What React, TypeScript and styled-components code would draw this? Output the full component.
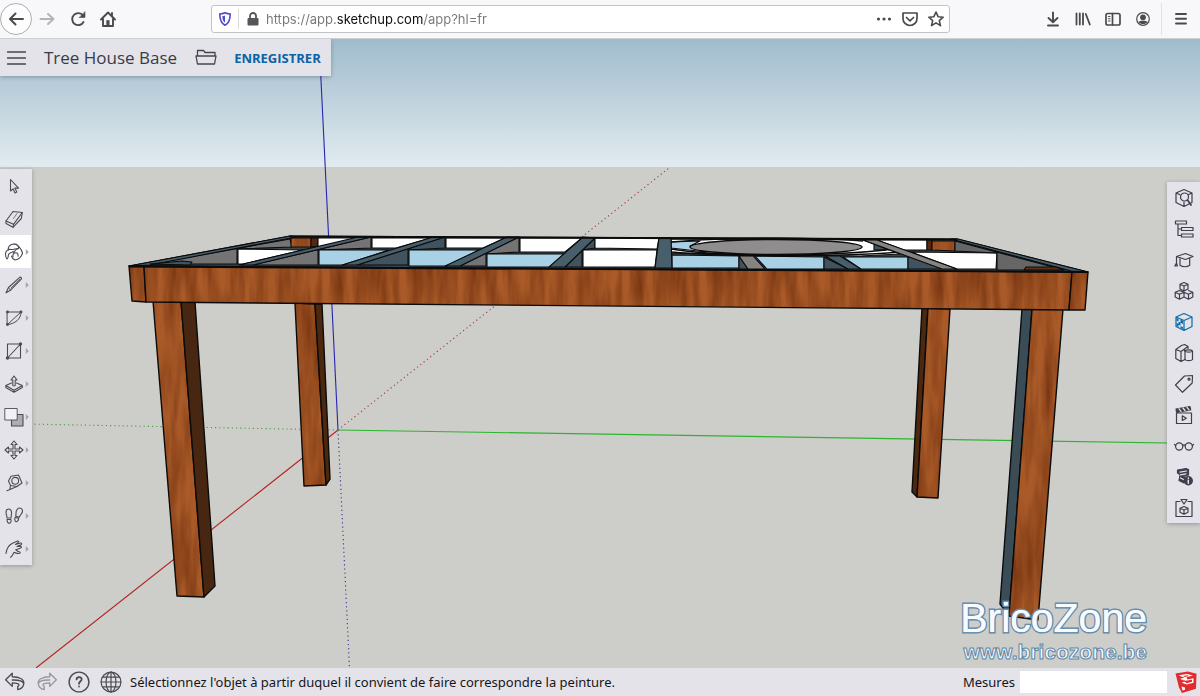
import React from "react";
import styled, { createGlobalStyle } from "styled-components";

const GlobalStyle = createGlobalStyle`
  *, *::before, *::after { box-sizing: border-box; }
  body { margin: 0; background: #cdcdca; }
  button, input { font: inherit; color: inherit; border: 0; padding: 0; margin: 0; background: none; }
`;

const Page = styled.div`
  display: flex;
  flex-direction: column;
  min-height: 100vh;
  font-family: "Open Sans", sans-serif;
  color: #222;
`;

/* ---------- browser bar ---------- */

const BrowserBar = styled.header`
  display: flex;
  align-items: center;
  height: 39px;
  background: #f8f8fa;
  border-bottom: 1px solid #c9d0d6;
  color: #4a4a4d;
`;

const NavGroup = styled.nav`
  display: flex;
  align-items: center;
  width: 211px;
`;

const BarButton = styled.button<{ $round?: boolean; $faint?: boolean; $w?: number }>`
  display: flex;
  align-items: center;
  justify-content: center;
  width: ${(p) => p.$w ?? 30}px;
  height: 32px;
  border-radius: ${(p) => (p.$round ? "50%" : "0")};
  border: ${(p) => (p.$round ? "1px solid #aeaeb2" : "0")};
  background: ${(p) => (p.$round ? "#fdfdfe" : "transparent")};
  color: ${(p) => (p.$faint ? "#b4b4b7" : "inherit")};
`;

const AddressBar = styled.div`
  display: flex;
  flex: 1;
  align-items: center;
  height: 28px;
  background: #fff;
  border: 1px solid #c3c3c6;
  border-radius: 3px;
`;

const AddressDivider = styled.span`
  width: 1px;
  height: 20px;
  background: #dcdcdf;
`;

const AddressInput = styled.input`
  flex: 1;
  min-width: 0;
  height: 24px;
  font-family: Inter, sans-serif;
  font-size: 13px;
  color: #77777a;
  outline: 0;
  background: linear-gradient(90deg, #77777a 71px, #0c0c0d 71px, #0c0c0d 157px, #77777a 157px);
  background-clip: text;
  -webkit-text-fill-color: transparent;
`;

const BrowserTools = styled.div`
  display: flex;
  align-items: center;
  justify-content: flex-end;
  width: 250px;
`;

const ToolsDivider = styled.span`
  width: 1px;
  height: 32px;
  margin-left: 3px;
  background: #e2e2e5;
`;

/* ---------- workspace ---------- */

const Workspace = styled.main`
  position: relative;
  flex: 1;
  display: flex;
  flex-direction: column;
  overflow: hidden;
  background: #cdcdca;
`;

const Scene = styled.svg`
  position: absolute;
  inset: 0;
  width: 100%;
  height: 100%;
`;

const FileBar = styled.div`
  position: relative;
  display: flex;
  align-items: center;
  align-self: flex-start;
  height: 37px;
  padding: 0 10px 0 6px;
  background: #e4e3e9;
  box-shadow: 0 1px 4px rgba(40, 50, 60, 0.35);
  color: #45454b;
`;

const FileName = styled.h1`
  margin: 0 18px;
  font-size: 17px;
  font-weight: 400;
  line-height: 24px;
  white-space: nowrap;
  color: #3a3a44;
`;

const IconButton = styled.button`
  display: flex;
  align-items: center;
  justify-content: center;
`;

const SaveButton = styled.button`
  margin-left: 17px;
  font-size: 13px;
  font-weight: 700;
  line-height: 20px;
  color: #0b62a4;
`;

const Panels = styled.div`
  position: relative;
  flex: 1;
  display: flex;
  align-items: flex-start;
  justify-content: space-between;
`;

const ToolPalette = styled.nav`
  display: flex;
  flex-direction: column;
  width: 32px;
  margin: 93px 0 40px;
  background: #e4e3e9;
  box-shadow: 0 1px 4px rgba(40, 50, 60, 0.35);
`;

const ToolButton = styled.button<{ $active?: boolean }>`
  display: flex;
  align-items: center;
  gap: 1px;
  height: 33px;
  padding-left: 4px;
  width: ${(p) => (p.$active ? "31px" : "32px")};
  background: ${(p) => (p.$active ? "#fff" : "transparent")};
  color: #4b4b55;
`;

const PanelPalette = styled.nav`
  display: flex;
  flex-direction: column;
  width: 33px;
  margin: 106px 0 40px;
  background: #e4e3e9;
  box-shadow: 0 1px 4px rgba(40, 50, 60, 0.35);
`;

const PanelButton = styled.button<{ $active?: boolean }>`
  display: flex;
  align-items: center;
  justify-content: center;
  height: 31px;
  color: ${(p) => (p.$active ? "#0b6aa8" : "#3f3f4d")};
`;

const Watermark = styled.div`
  position: absolute;
  right: 53px;
  bottom: 4px;
  font-family: "Liberation Sans", Arial, sans-serif;
  color: #f6fbff;
  text-align: right;
`;

const WatermarkTitle = styled.div`
  font-size: 41px;
  line-height: 44px;
  text-shadow: 0 0 1px #fff;
  -webkit-text-stroke: 3px #5f86a6;
  paint-order: stroke fill;
`;

const WatermarkSite = styled.div`
  font-size: 21px;
  font-weight: 700;
  line-height: 24px;
  -webkit-text-stroke: 1px #5f86a6;
`;

/* ---------- status bar ---------- */

const StatusBar = styled.footer`
  display: flex;
  align-items: center;
  height: 28px;
  padding: 0 2px 0 4px;
  background: #e4e3e9;
  color: #16161a;
  font-size: 13px;
  line-height: 20px;
`;

const StatusButtons = styled.div`
  display: flex;
  align-items: center;
  gap: 10px;
  color: #4b4b52;
`;

const StatusText = styled.p`
  flex: 1;
  margin: 0 0 0 8px;
  font-family: "Noto Sans", sans-serif;
`;

const MeasureLabel = styled.label`
  margin-right: 5px;
  font-family: "Noto Sans", sans-serif;
`;

const MeasureInput = styled.input`
  width: 147px;
  height: 22px;
  margin-right: 8px;
  background: #fff;
`;

/* ---------- icons ---------- */

type IconProps = { size?: number; children: React.ReactNode; sw?: number };

const Icon = ({ size = 20, sw = 1.2, children }: IconProps) => (
  <svg
    width={size}
    height={size}
    viewBox="0 0 20 20"
    fill="none"
    stroke="currentColor"
    strokeWidth={sw}
    strokeLinejoin="round"
    strokeLinecap="round"
    aria-hidden="true"
  >
    {children}
  </svg>
);

const Expander = () => (
  <svg width="4" height="8" viewBox="0 0 4 8" aria-hidden="true">
    <path d="M.8 1 3.800 4 .8 7z" fill="#a4a4ab" />
  </svg>
);

const tools: { label: string; more?: boolean; active?: boolean; art: React.ReactNode }[] = [
  { label: "Sélectionner", art: <path d="M6.5 3.500v11.500l2.600-2.200 1.900 4.200 1.800-.9-1.900-4h3.600z" /> },
  {
    label: "Effacer",
    art: (
      <>
        <path d="M9 2.500 18.300 3.500 17.300 9.500 9 18.300 2 14.500V12z" />
        <path d="m2 12 7.500 3.300L18.300 3.500M9.500 15.300l-.5 3" />
        <path d="m9.500 9.500 3.500-5" strokeWidth=".7" />
      </>
    ),
  },
  {
    label: "Peinture",
    more: true,
    active: true,
    art: (
      <>
        <path d="M4.500 8C3.500 4.800 6 2 10 2c3.500 0 5 2 4.500 4.500" />
        <path d="M10 2c4 .3 7.500 5 8.500 9-1 4-4.500 6.500-7.500 7-1.200-.5-3-2-3.500-4" />
        <path d="M14.500 6.500C12 6 9.500 8 7 7.500 4 6.800 1.500 9 1.500 12c0 2 .3 4 1.500 5 1.500-.5 1-3 1.500-4.500C5.200 11 7.200 11 9.200 9.300" />
        <path d="M9 15c-.3-3.500 1.500-7.500 5.500-8.500M9.500 11.500c2.500-1.500 5-.5 4.500 2.800" />
      </>
    ),
  },
  {
    label: "Crayon",
    more: true,
    art: (
      <>
        <path d="M2 17.800 4.500 12.500 15.700 2.300c1-.7 2.400.7 1.600 1.800L6.500 15.200z" />
        <path d="m4.500 12.500 2 2.700M7 13 16 4" strokeWidth=".8" />
      </>
    ),
  },
  {
    label: "Arc",
    more: true,
    art: (
      <>
        <path d="M3.500 4h13.500c0 7-6 12-13.500 12.500zM3.500 16.500 17 4" strokeWidth="1" />
        <g fill="currentColor"><circle cx="3.500" cy="4" r=".9" /><circle cx="17" cy="4" r=".9" /><circle cx="3.500" cy="16.500" r=".9" /></g>
      </>
    ),
  },
  {
    label: "Rectangle",
    more: true,
    art: (
      <>
        <path d="M3.500 3h13v14h-13zM3.500 17l13-14" strokeWidth="1.100" />
        <g fill="currentColor"><circle cx="3.500" cy="17" r="1.100" /><circle cx="16.500" cy="3" r="1.100" /></g>
      </>
    ),
  },
  {
    label: "Pousser/Tirer",
    more: true,
    art: (
      <>
        <path d="M7.500 9 1.800 11.500v2l8.200 4.700 8.300-4.700v-2L12.500 9M1.800 11.500l8.200 4.700 8.300-4.700M10 16.200v2" />
        <path d="M8.800 11.500V6H7l3-4 3 4h-1.800v5.500c-.6.700-1.800.7-2.400 0z" />
      </>
    ),
  },
  {
    label: "Échelle",
    more: true,
    art: (
      <>
        <path d="M13 7.500h6V19H7.500v-6" fill="#adadb3" />
        <path d="M1.200 1.500h12V13h-12z" fill="#f2f2f5" strokeWidth=".9" />
      </>
    ),
  },
  {
    label: "Déplacer",
    more: true,
    art: (
      <path d="m10 1 3 3.500h-2V9h4.500V7L19 10l-3.500 3v-2H11v4.500h2L10 19l-3-3.500h2V11H4.500v2L1 10l3.500-3v2H9V4.500H7z" />
    ),
  },
  {
    label: "Mètre",
    more: true,
    art: (
      <>
        <path d="M7 3.200 14.500 2 18 10 13 13.500 6.500 12.500 4.500 8z" />
        <circle cx="11.200" cy="7.800" r="3.400" />
        <path d="M13 13.500 3 17.800M6.500 12.500l-.7 4" />
      </>
    ),
  },
  {
    label: "Marcher",
    more: true,
    art: (
      <>
        <path d="M2 6.500C2 2 7 1.800 7.500 6c.3 2.300-.6 4-.4 6H3c.2-2-1-3.500-1-5.500zM3 13.500h4c.8 5-4 5-4 0z" />
        <path d="M12.800 4c2-3.700 6.500-1.500 5.500 2-.6 2-2.300 3-3 5.300l-3.600-1.400c.8-2-.4-3.700 1.100-5.900zM11.200 11.200l3.500 1.400c-.8 5-5.300 3.500-3.500-1.400z" />
      </>
    ),
  },
  {
    label: "Panoramique",
    more: true,
    art: (
      <>
        <path d="M2 14.500C2.500 10 4.500 6.500 8 4.500l5.500-2.500c1.300-.3 1.600 1 .5 1.700L11.500 5.500l5-1.500c1.300-.2 1.600 1.100.5 1.700l-4 1.800 3.500-.2c1.100 0 1.200 1.200.2 1.600l-4.700 1.900" />
        <path d="M12 10.800c1 1.300 2 1.800 3.800 2.200.9.700.1 1.600-.9 1.500-2 0-3.400-.7-4.900-1.200-1.300 1.500-.5 3-3.500 5" />
      </>
    ),
  },
];

const Cube = () => <path d="M10 1.500 18 5v9.500L10 18.500 2 14.500V5zM2 5l8 3.500L18 5M10 8.500v10" />;

const panels: { label: string; active?: boolean; art: React.ReactNode }[] = [
  {
    label: "Informations",
    art: (
      <>
        <path d="M10 1.500 18 5v9.500L10 18.500 2 14.500V5zM2 5l4 1.800M18 5l-4 1.800M10 14v4.500" />
        <circle cx="10.500" cy="9" r="4" fill="#e4e3e9" />
        <path d="m13.500 12 3.500 5" strokeWidth="1.700" />
      </>
    ),
  },
  {
    label: "Structure",
    art: <path d="M1.500 2h11v3h-11zM7.500 8.500H19v3H7.500zM7.500 15H19v3H7.500zM4 5v11.500h3.500M4 10h3.500" />,
  },
  {
    label: "Instructeur",
    art: (
      <>
        <path d="m2.500 6.500 9-3 7.500 3-7.500 3zM2.500 6.500V13M.8 16l1.700-3 .9 3z" />
        <path d="M6 8.500v6.800c2.700 1.900 7 1.900 9.700 0V8.200" />
      </>
    ),
  },
  {
    label: "Composants",
    art: (
      <path d="m10 1.500 4 1.800V8l-4 2-4-2V3.300zM6 3.300 10 5l4-1.700M10 5v5M5.500 9.500 10 11.300V16l-4.500 2.200L1.200 16v-4.700zM1.200 11.300l4.300 1.900 4.500-1.900M5.500 13.200v5M14.500 9.500l4.300 1.800V16l-4.300 2.200L10 16v-4.700M10 11.300l4.500 1.900 4.300-1.900M14.500 13.200v5" />
    ),
  },
  {
    label: "Matières",
    active: true,
    art: (
      <>
        <Cube />
        <path d="m2.500 6 2 .8v3l2 .8v-3L9 8.800v3.300l-2.500-1.300V14L9 15.300v2L6.500 16v-2.200l-2-1V15l-2-1v-3l2 .8V9.500l-2-1z" fill="currentColor" stroke="none" />
      </>
    ),
  },
  {
    label: "Styles",
    art: (
      <>
        <path d="M10.500 8V6L7 8.500 1.800 6.500v9l5.200 3V8.500M1.800 6.500 7.500 2.500 10.500 1.500 14 3.500v2M10.500 6 14 3.500M7 18.500l4-2" />
        <path d="M11 8v8.500c1 1.600 6.500 1.600 7.500 0V8c-1-1.600-6.500-1.600-7.500 0zc1 1.500 6.500 1.500 7.500 0" />
      </>
    ),
  },
  {
    label: "Balises",
    art: (
      <>
        <path d="M10.500 2 18.500 1.500 18.200 9 8.500 18.300 1.500 11z" />
        <circle cx="15" cy="5.200" r="1" />
      </>
    ),
  },
  {
    label: "Scènes",
    art: (
      <>
        <path d="M2.500 8h15v10.500h-15zM8.300 10.800v4.700l4-2.300z" />
        <path d="m2 4 14-2.500.7 3.300L2.600 7.500z" fill="currentColor" />
        <path d="m5 3.800 2 2.500M9 3l2 2.500M13 2.300l2 2.500" stroke="#e4e3e9" strokeWidth="1.300" />
      </>
    ),
  },
  {
    label: "Affichage",
    art: (
      <>
        <circle cx="5.200" cy="10.500" r="3.600" />
        <circle cx="14.800" cy="10.500" r="3.600" />
        <path d="M8.600 9.500c.8-.8 2-.8 2.800 0M1.600 9.500.5 8.500M18.400 9.500l1.100-1" />
      </>
    ),
  },
  {
    label: "Infos modèle",
    art: (
      <>
        <path d="m3.500 3 8.500-1.500 2.500 1V8L6 9.500v-2L3.500 6z" fill="currentColor" />
        <path d="m6 9 8 1.500-4 5.500-5-2.500z" fill="currentColor" />
        <path d="m6 5.200 6.500-1.200M6.500 7.800l5.500-1M6.500 11l3 1.500" stroke="#e4e3e9" />
        <circle cx="14.300" cy="13.700" r="4.700" fill="currentColor" stroke="none" />
        <path d="M14.300 13.300v3M14.300 11.100v.1" stroke="#e4e3e9" strokeWidth="1.500" />
      </>
    ),
  },
  {
    label: "3D Warehouse",
    art: (
      <>
        <path d="M6 3.500H2v15h16v-15h-4M7 1.500h6L10 6z" />
        <path d="m10 8.500 4 1.800v4L10 16.200l-4-1.900v-4zM6 10.300l4 1.700 4-1.700M10 12v4.200" />
      </>
    ),
  },
];

/* ---------- 3D model ---------- */

type Face = [points: string, fill: string];

const slate = "#40535f";
const slateTop = "#495e6b";
const sky = "#a9d1e5";
const grey = "#747474";

const frameFaces: Face[] = [
  ["290,236 957,239 1088,272 129,266", "#39464e"],
  ["290,239 292,247 237,249 237,264 150,264", grey],
  ["291,238 311,238 311,247 291,247", "url(#wood)"],
  ["311,238 318,238 318,246 311,247", "#54290f"],
  ["318,238 358,238 318,247", "#fff"],
  ["238,249 303,250 243,264 238,264", "#fff"],
  ["371,237 371,248 318,250 318,265 253,265", grey],
  ["239,265 358,237 371,237 253,265", slateTop],
  ["372,238 431,238 396,248 372,248", "#fff"],
  ["319,250 389,250 343,265 319,265", sky],
  ["445,237 445,248 408,250 408,265 357,265", slate],
  ["342,265 433,237 445,237 357,265", slateTop],
  ["446,238 505,238 483,248 446,248", "#fff"],
  ["409,250 479,250 447,266 409,266", sky],
  ["519,237 519,252 486,254 486,266 460,266", grey],
  ["445,266 507,237 519,237 460,266", slateTop],
  ["520,238 582,238 565,252 520,252", "#fff"],
  ["487,254 564,254 550,267 487,267", sky],
  ["595,238 595,248 582,250 582,267 565,267", slate],
  ["549,267 583,237 595,238 565,267", slateTop],
  ["595,238 659,238 657,249 595,248", "#fff"],
  ["583,250 657,250 655,267 583,267", "#fff"],
  ["671,239 863,240 900,254 860,256 671,253", "#fff"],
  ["671,242 700,241 690,246 706,252 671,248", sky],
  ["672,255 739,256 739,268 672,268", sky],
  ["739,256 739,269 748,269", slate],
  ["739,256 753,256 765,269 748,269", "#858481"],
  ["755,256 824,257 824,269 767,269", sky],
  ["824,257 824,269 848,269", slate],
  ["825,256 840,256 861,269 848,269", slateTop],
  ["843,257 908,257 908,269 861,269", sky],
  ["908,257 921,257 942,269 908,269", slate],
  ["877,240 927,240 927,250 904,250", "#fff"],
  ["927,240 932,240 932,250 927,250", "#54290f"],
  ["932,241 955,241 955,251 932,250", "url(#wood)"],
  ["911,252 997,253 996,269 957,269", "#fff"],
  ["955,241 955,251 997,253 997,270 1064,270", "#666"],
  ["874,244 874,250 889,250", slate],
];

const rimFaces: Face[] = [
  ["129,266 290,236 296,237 150,265", slateTop],
  ["951,239 958,239 1088,272 1071,271", slateTop],
  ["150,264 182,261 192,262 190,265", slate],
  ["1026,267 1056,267 1064,270 1024,270", "#5c3218"],
  ["863,240 877,240 957,269 942,269", "#858481"],
  ["659,238 671,238 672,268 655,268", slateTop],
];

const legFaces: Face[] = [
  ["295,303 315,304 326,485 304,486", "url(#wood)"],
  ["315,304 322,304 330,479 326,485", "#4c280f"],
  ["922,308 928,308 917,497 912,492", "#4c280f"],
  ["928,308 950,309 938,498 917,497", "url(#wood)"],
  ["153,301 181,301 204,597 177,596", "url(#wood)"],
  ["181,301 195,302 215,586 204,597", "#472711"],
  ["1022,309 1032,309 1009,616 1000,604", "#3a4d57"],
  ["1032,309 1063,309 1038,620 1009,616", "url(#wood)"],
];

const beamFaces: Face[] = [
  ["129,266 144,266 146,302 132,301", "url(#wood)"],
  ["144,266 1072,272 1069,310 146,302", "url(#wood)"],
  ["1072,272 1088,272 1085,310 1069,310", "url(#wood)"],
];

const Faces = ({ faces, width = 1.4 }: { faces: Face[]; width?: number }) => (
  <g stroke="#0b0b0b" strokeWidth={width} strokeLinejoin="round">
    {faces.map(([points, fill]) => (
      <polygon key={points} points={points} fill={fill} />
    ))}
  </g>
);

const ModelScene = () => (
  <Scene viewBox="0 39 1200 629" preserveAspectRatio="xMidYMin slice" role="img" aria-label="Tree House Base">
    <defs>
      <linearGradient id="sky" x1="0" y1="0" x2="0" y2="1">
        <stop offset="0" stopColor="#a0bccc" />
        <stop offset=".45" stopColor="#bdd1dc" />
        <stop offset="1" stopColor="#e2ebf0" />
      </linearGradient>
      <pattern id="wood" width="300" height="300" patternUnits="userSpaceOnUse">
        <rect width="300" height="300" fill="#a95a28" />
        <rect width="300" height="300" filter="url(#grain)" />
      </pattern>
      <filter id="grain" x="0" y="0" width="100%" height="100%" colorInterpolationFilters="sRGB">
        <feTurbulence type="fractalNoise" baseFrequency=".09 .012" numOctaves="3" seed="8" stitchTiles="stitch" />
        <feColorMatrix values="0 0 0 0 .46  0 0 0 0 .2  0 0 0 0 .06  1.600 0 0 0 -.5" />
      </filter>
    </defs>

    <rect y="39" width="1200" height="629" fill="#cdcdca" />
    <rect y="39" width="1200" height="128" fill="url(#sky)" />

    <g fill="none" strokeWidth="1.100">
      <path d="M319 39 338 430" stroke="#2a25b0" />
      <path d="m338 430 11.500 238" stroke="#3a3790" strokeDasharray="1.200 3" />
      <path d="M338 430 36 668" stroke="#b52020" />
      <path d="m338 430 331-262" stroke="#a23c3c" strokeDasharray="1.200 3" />
      <path d="m338 430 862 13.500" stroke="#2db52d" />
      <path d="M338 430 0 423.500" stroke="#45a045" strokeDasharray="1.200 3" />
    </g>

    <Faces faces={legFaces} />
    <Faces faces={frameFaces} width={1.1} />
    <g fill="none" stroke="#0b0b0b" strokeWidth="1.400">
      <path d="M671 242c60-5 140-5 192-1M671 249c50 8 150 8 215 1" />
      <path d="M671 252c60 5 170 5 228 0" />
      <ellipse cx="776" cy="247" rx="86" ry="7.500" fill="#8f8d8e" />
    </g>
    <Faces faces={rimFaces} width={1.1} />
    <Faces faces={beamFaces} />
    <path d="M290 236.500 957 239.500M129 266.500 1088 272" stroke="#0b0b0b" strokeWidth="1.900" />
  </Scene>
);

export default function App() {
  return (
    <>
      <GlobalStyle />
      <Page>
        <BrowserBar>
          <NavGroup aria-label="Navigation">
            <BarButton $round $w={32} aria-label="Précédent">
              <Icon sw={2}><path d="M17 10H4M9.500 4.500 4 10l5.500 5.500" /></Icon>
            </BarButton>
            <BarButton $faint aria-label="Suivant">
              <Icon sw={2}><path d="M3.500 10h13M11 5l5.500 5-5.500 5" /></Icon>
            </BarButton>
            <BarButton $w={31} aria-label="Actualiser">
              <Icon sw={1.900}>
                <path d="M15.500 13A6 6 0 1 1 15 6.500" />
                <path d="M17 3v5.500h-5.500z" fill="currentColor" strokeWidth=".6" />
              </Icon>
            </BarButton>
            <BarButton aria-label="Accueil">
              <Icon sw={1.900}>
                <path d="m3 10.500 7-7 7 7M5 9.500V17h10V9.500M14 4v2.500" />
                <path d="M8.800 11.500h2.400V17H8.800z" fill="currentColor" strokeWidth=".6" />
              </Icon>
            </BarButton>
          </NavGroup>

          <AddressBar>
            <BarButton $w={26} aria-label="Protection">
              <svg width="14" height="16" viewBox="0 0 14 16" fill="none" aria-hidden="true">
                <path d="M7 1.800c1.800.9 3.500 1.200 5.200 1.200 0 5-.8 9-5.200 11.200C2.600 12 1.800 8 1.800 3 3.500 3 5.200 2.700 7 1.800z" stroke="#5a45c8" strokeWidth="1.600" />
                <path d="M7 4.500v7.200C5 10.200 4.400 8 4.300 5.200 5.300 5.100 6.200 4.900 7 4.500z" fill="#4750c4" />
              </svg>
            </BarButton>
            <AddressDivider />
            <BarButton $w={27} aria-label="Connexion sécurisée">
              <svg width="14" height="14" viewBox="0 0 14 14" aria-hidden="true">
                <rect x="1.500" y="6" width="11" height="7.500" rx="1" fill="#56565a" />
                <path d="M4 6.500V4a3 3 0 0 1 6 0v2.500" fill="none" stroke="#56565a" strokeWidth="1.800" />
              </svg>
            </BarButton>
            <AddressInput aria-label="Adresse" defaultValue="https://app.sketchup.com/app?hl=fr" />
            <BarButton $w={27} aria-label="Actions">
              <Icon><g fill="currentColor" stroke="none"><circle cx="4.500" cy="10" r="1.600" /><circle cx="10" cy="10" r="1.600" /><circle cx="15.500" cy="10" r="1.600" /></g></Icon>
            </BarButton>
            <BarButton $w={26} aria-label="Pocket">
              <Icon sw={1.700}><path d="M3 4h14v5.500a7 7 0 0 1-14 0zM6.500 8.500l3.500 3.300 3.500-3.300" /></Icon>
            </BarButton>
            <BarButton $w={26} aria-label="Marque-page">
              <Icon sw={1.600}><path d="m10 3 2.100 4.700 5.100.5-3.900 3.400 1.200 5-4.500-2.700-4.500 2.700 1.200-5-3.900-3.400 5.100-.5z" /></Icon>
            </BarButton>
          </AddressBar>

          <BrowserTools>
            <BarButton aria-label="Téléchargements">
              <Icon sw={1.900}><path d="M10 3.500v9M5.500 9l4.500 4.200L14.500 9M5 16.500h10" /></Icon>
            </BarButton>
            <BarButton aria-label="Bibliothèque">
              <Icon sw={1.800}><path d="M3.500 4.500v11M6.800 4.500v11M10 4.500v11M12.800 5l4 10.500" /></Icon>
            </BarButton>
            <BarButton aria-label="Panneau latéral">
              <Icon sw={1.700}>
                <rect x="3" y="4.500" width="14" height="11.500" rx="1.800" />
                <path d="M9.500 4.500V16" />
                <path d="M5.500 7.500h1.500M5.500 9.800h1.500M5.500 12h1.500" strokeWidth="1" />
              </Icon>
            </BarButton>
            <BarButton aria-label="Compte">
              <Icon sw={1.200}>
                <circle cx="10" cy="10" r="6.300" />
                <circle cx="10" cy="8.300" r="2.900" fill="currentColor" stroke="none" />
                <path d="M5.500 13c1.200-1.600 7.800-1.600 9 0-2 2.800-7 2.800-9 0z" fill="currentColor" stroke="none" />
              </Icon>
            </BarButton>
            <ToolsDivider />
            <BarButton $w={38} aria-label="Menu">
              <Icon sw={1.900}><path d="M5 5h10M5 9.800h10M5 14.500h10" /></Icon>
            </BarButton>
          </BrowserTools>
        </BrowserBar>

        <Workspace>
          <ModelScene />
          <Watermark>
            <WatermarkTitle>BricoZone</WatermarkTitle>
            <WatermarkSite>www.bricozone.be</WatermarkSite>
          </Watermark>
          <FileBar>
            <IconButton aria-label="Menu principal">
              <Icon sw={1.300}><path d="M1.500 4h18M1.500 10h18M1.500 16h18" /></Icon>
            </IconButton>
            <FileName>Tree House Base</FileName>
            <IconButton aria-label="Ouvrir">
              <svg width="22" height="18" viewBox="0 0 22 18" fill="none" stroke="currentColor" strokeWidth="1.300" strokeLinejoin="round" aria-hidden="true">
                <path d="M2.500 7V1.500h6L10 3.500h10V7M1 7h20l-1.500 8h-17z" />
              </svg>
            </IconButton>
            <SaveButton>ENREGISTRER</SaveButton>
          </FileBar>
          <Panels>
            <ToolPalette aria-label="Outils">
              {tools.map((t) => (
                <ToolButton key={t.label} $active={t.active} aria-label={t.label}>
                  <Icon sw={1.100}>{t.art}</Icon>
                  {t.more && <Expander />}
                </ToolButton>
              ))}
            </ToolPalette>
            <PanelPalette aria-label="Panneaux">
              {panels.map((p) => (
                <PanelButton key={p.label} $active={p.active} aria-label={p.label}>
                  <Icon>{p.art}</Icon>
                </PanelButton>
              ))}
            </PanelPalette>
          </Panels>
        </Workspace>

        <StatusBar>
          <StatusButtons>
            <IconButton aria-label="Annuler">
              <Icon size={22}><path d="M7.500 2v3.200c6 .3 11 2 10.500 6.300-.3 3-2.500 4.800-5.500 5.500v-3c1.500-.5 1.500-2 0-2.600-1.300-.4-3-.6-5-.6V14L1.500 8zM18 11.500c-1-2.500-5-3.500-10.500-3.300" /></Icon>
            </IconButton>
            <IconButton aria-label="Rétablir">
              <Icon size={22}><path opacity=".5" d="M12.500 2v3.200c-6 .3-11 2-10.500 6.300.3 3 2.500 4.800 5.500 5.500v-3c-1.500-.5-1.500-2 0-2.600 1.300-.4 3-.6 5-.6V14l6-6zM2 11.500c1-2.500 5-3.500 10.500-3.300" /></Icon>
            </IconButton>
            <IconButton aria-label="Aide">
              <Icon size={22} sw={1.300}>
                <circle cx="10" cy="10" r="9" />
                <path d="M7.800 7.700c.2-3 4.800-2.700 4.600 0-.1 1.600-2.400 1.700-2.400 3.900M10 14v.2" strokeWidth="1.600" />
              </Icon>
            </IconButton>
            <IconButton aria-label="Langue">
              <Icon size={22} sw={1.100}>
                <circle cx="10" cy="10" r="9" />
                <ellipse cx="10" cy="10" rx="4.500" ry="9" />
                <path d="M10 1v18M1 10h18M2.500 5.500h15M2.500 14.500h15" />
              </Icon>
            </IconButton>
          </StatusButtons>
          <StatusText>Sélectionnez l'objet à partir duquel il convient de faire correspondre la peinture.</StatusText>
          <MeasureLabel htmlFor="measure">Mesures</MeasureLabel>
          <MeasureInput id="measure" />
          <svg width="23" height="24" viewBox="0 0 23 24" role="img" aria-label="SketchUp">
            <path d="M.5 3.500 13 1.500l8.500 2.300-.5 15L7 23 4 17.500z" fill="#e32b2f" />
            <path d="M3.500 5.200 12 4l6 1.600-6.500 1.700 1 2.200 6-1.200v4.500l-7 1.800-5-2 4-1.200L5 8.800l4.500-1z" fill="#fff" />
            <path d="m8 6 4.500-.7 1.500.6-4 1.200zM7.500 9.500l3 1.300 6.500-1v2l-5.500 1.400z" fill="#e32b2f" />
            <path d="m6.500 16.500 3.500 1v2.200l-2.500.8z" fill="#fff" />
          </svg>
        </StatusBar>
      </Page>
    </>
  );
}
